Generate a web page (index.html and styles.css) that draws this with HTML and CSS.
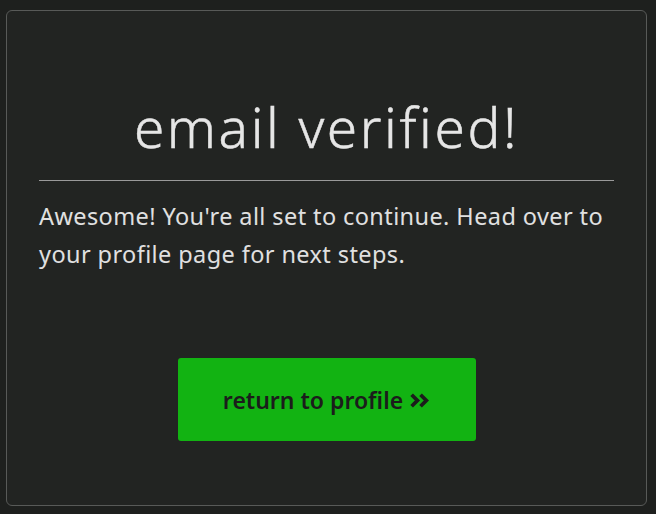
FILE: index.html
```html
<!DOCTYPE html>
<html>
<head>
<meta charset="utf-8">
<link rel="stylesheet" href="styles.css">
</head>
<body>
<main class="card">
  <h1 class="title">email verified!</h1>
  <hr class="rule">
  <p class="text">Awesome! You're all set to continue. Head over to your profile page for next steps.</p>
  <div class="actions">
    <a class="btn" href="#">return to profile <svg class="chev" viewBox="0 0 20 16" width="21" height="17"><path d="M2.5 2.5 L8 8 L2.5 13.5 M11 2.5 L16.5 8 L11 13.5" fill="none" stroke="#1b1d1b" stroke-width="3.6" stroke-linecap="butt" stroke-linejoin="miter"/></svg></a>
  </div>
</main>
</body>
</html>
```
FILE: styles.css
```css
html, body {
  margin: 0;
  padding: 0;
  background: #1e201e;
  height: 100%;
}
body {
  padding: 10px 9px 8px 6px;
  box-sizing: border-box;
  font-family: "Noto Sans", sans-serif;
  color: #e4e4e4;
}
.card {
  box-sizing: border-box;
  height: 496px;
  background: #222422;
  border: 1px solid #585a58;
  border-radius: 6px;
  padding: 0 32px;
  display: flex;
  flex-direction: column;
}
.title {
  margin: 84px 0 0;
  font-weight: 300;
  font-size: 55px;
  line-height: 64px;
  letter-spacing: 2.6px;
  text-align: center;
  color: #e6e6e6;
  -webkit-text-stroke: 0.5px #e6e6e6;
}
.rule {
  margin: 21px 0 0;
  border: 0;
  height: 1px;
  background: #9a9a9a;
}
.text {
  margin: 16px 0 0;
  font-size: 23.5px;
  line-height: 38px;
  letter-spacing: 0.4px;
  color: #e0e0e0;
}
.actions {
  display: flex;
  justify-content: center;
  margin-top: 85px;
}
.btn {
  width: 298px;
  height: 83px;
  background: #12b312;
  border-radius: 3px;
  display: flex;
  align-items: center;
  justify-content: center;
  gap: 6px;
  color: #1b1d1b;
  text-decoration: none;
  font-size: 23px;
  font-weight: 600;
}
.chev { display: block; margin-top: 2px; }
```
